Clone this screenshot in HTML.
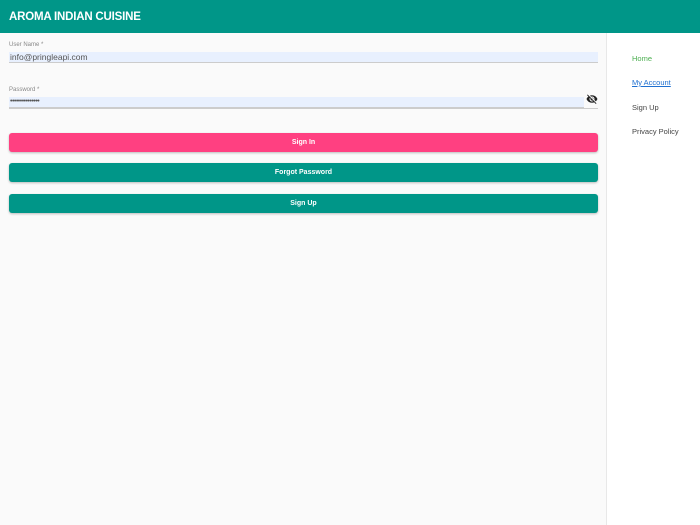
<!DOCTYPE html>
<html><head><style>
*{margin:0;padding:0;box-sizing:border-box}
body{width:700px;height:525px;overflow:hidden;font-family:"Liberation Sans",sans-serif;background:#fafafa;position:relative}
.hdr{position:absolute;left:0;top:0;width:700px;height:33px;background:#009688;color:#fff;font-weight:bold;font-size:11.5px;padding:11px 0 0 9px;letter-spacing:-0.2px}
.side{position:absolute;left:606px;top:33px;width:94px;height:492px;background:#fff;border-left:1px solid #e8e8e8}
.side a{position:absolute;left:25px;font-size:7.5px;color:#444;text-decoration:none}
.lbl{position:absolute;left:9px;font-size:6px;color:#888}
.inp{position:absolute;left:9px;width:589px;height:11px;background:#e8f0fe;border-bottom:1px solid #ccc;font-size:8.5px;color:#555;line-height:10px;padding-left:1px}
.btn{position:absolute;left:9px;width:589px;height:19px;border-radius:3px;color:#fff;font-weight:bold;font-size:7px;text-align:center;line-height:19px;box-shadow:0 1px 2px rgba(0,0,0,.25)}
</style></head><body>
<div class="hdr">AROMA INDIAN CUISINE</div>
<div class="lbl" style="top:42px">User Name *</div>
<div class="inp" style="top:52px">info@pringleapi.com</div>
<div class="lbl" style="top:87px">Password *</div>
<div class="inp" style="top:97px;width:575px;font-size:7px;letter-spacing:-0.5px">•••••••••••••••</div>
<div style="position:absolute;left:9px;top:108px;width:589px;border-bottom:1px solid #ccc"></div>
<svg style="position:absolute;left:586px;top:93px" width="12" height="12" viewBox="0 0 24 24"><path fill="#222" d="M12 7c2.8 0 5 2.2 5 5 0 .6-.1 1.3-.4 1.8l2.9 2.9c1.5-1.3 2.7-2.9 3.4-4.7-1.7-4.4-6-7.5-11-7.5-1.4 0-2.7.3-4 .7l2.2 2.2c.6-.3 1.2-.4 1.9-.4zM2 4.3l2.3 2.3.5.4C3.1 8.3 1.8 10 1 12c1.7 4.4 6 7.5 11 7.5 1.5 0 3-.3 4.4-.8l.4.4 2.9 2.9 1.3-1.3L3.3 3 2 4.3zm5.5 5.5l1.6 1.6c0 .2-.1.4-.1.6 0 1.700 1.3 3 3 3 .2 0 .4 0 .6-.1l1.6 1.6c-.7.3-1.4.5-2.2.5-2.8 0-5-2.2-5-5 0-.8.2-1.5.5-2.2zm4.3-.8l3.2 3.2V12c0-1.7-1.3-3-3-3h-.2z"/></svg>
<div class="btn" style="top:133px;background:#ff4081">Sign In</div>
<div class="btn" style="top:163px;background:#009688">Forgot Password</div>
<div class="btn" style="top:194px;background:#009688">Sign Up</div>
<div class="side">
<a style="top:21px;color:#4caf50">Home</a>
<a style="top:45px;color:#1e6fd0;text-decoration:underline">My Account</a>
<a style="top:70px">Sign Up</a>
<a style="top:94px">Privacy Policy</a>
</div>
</body></html>
